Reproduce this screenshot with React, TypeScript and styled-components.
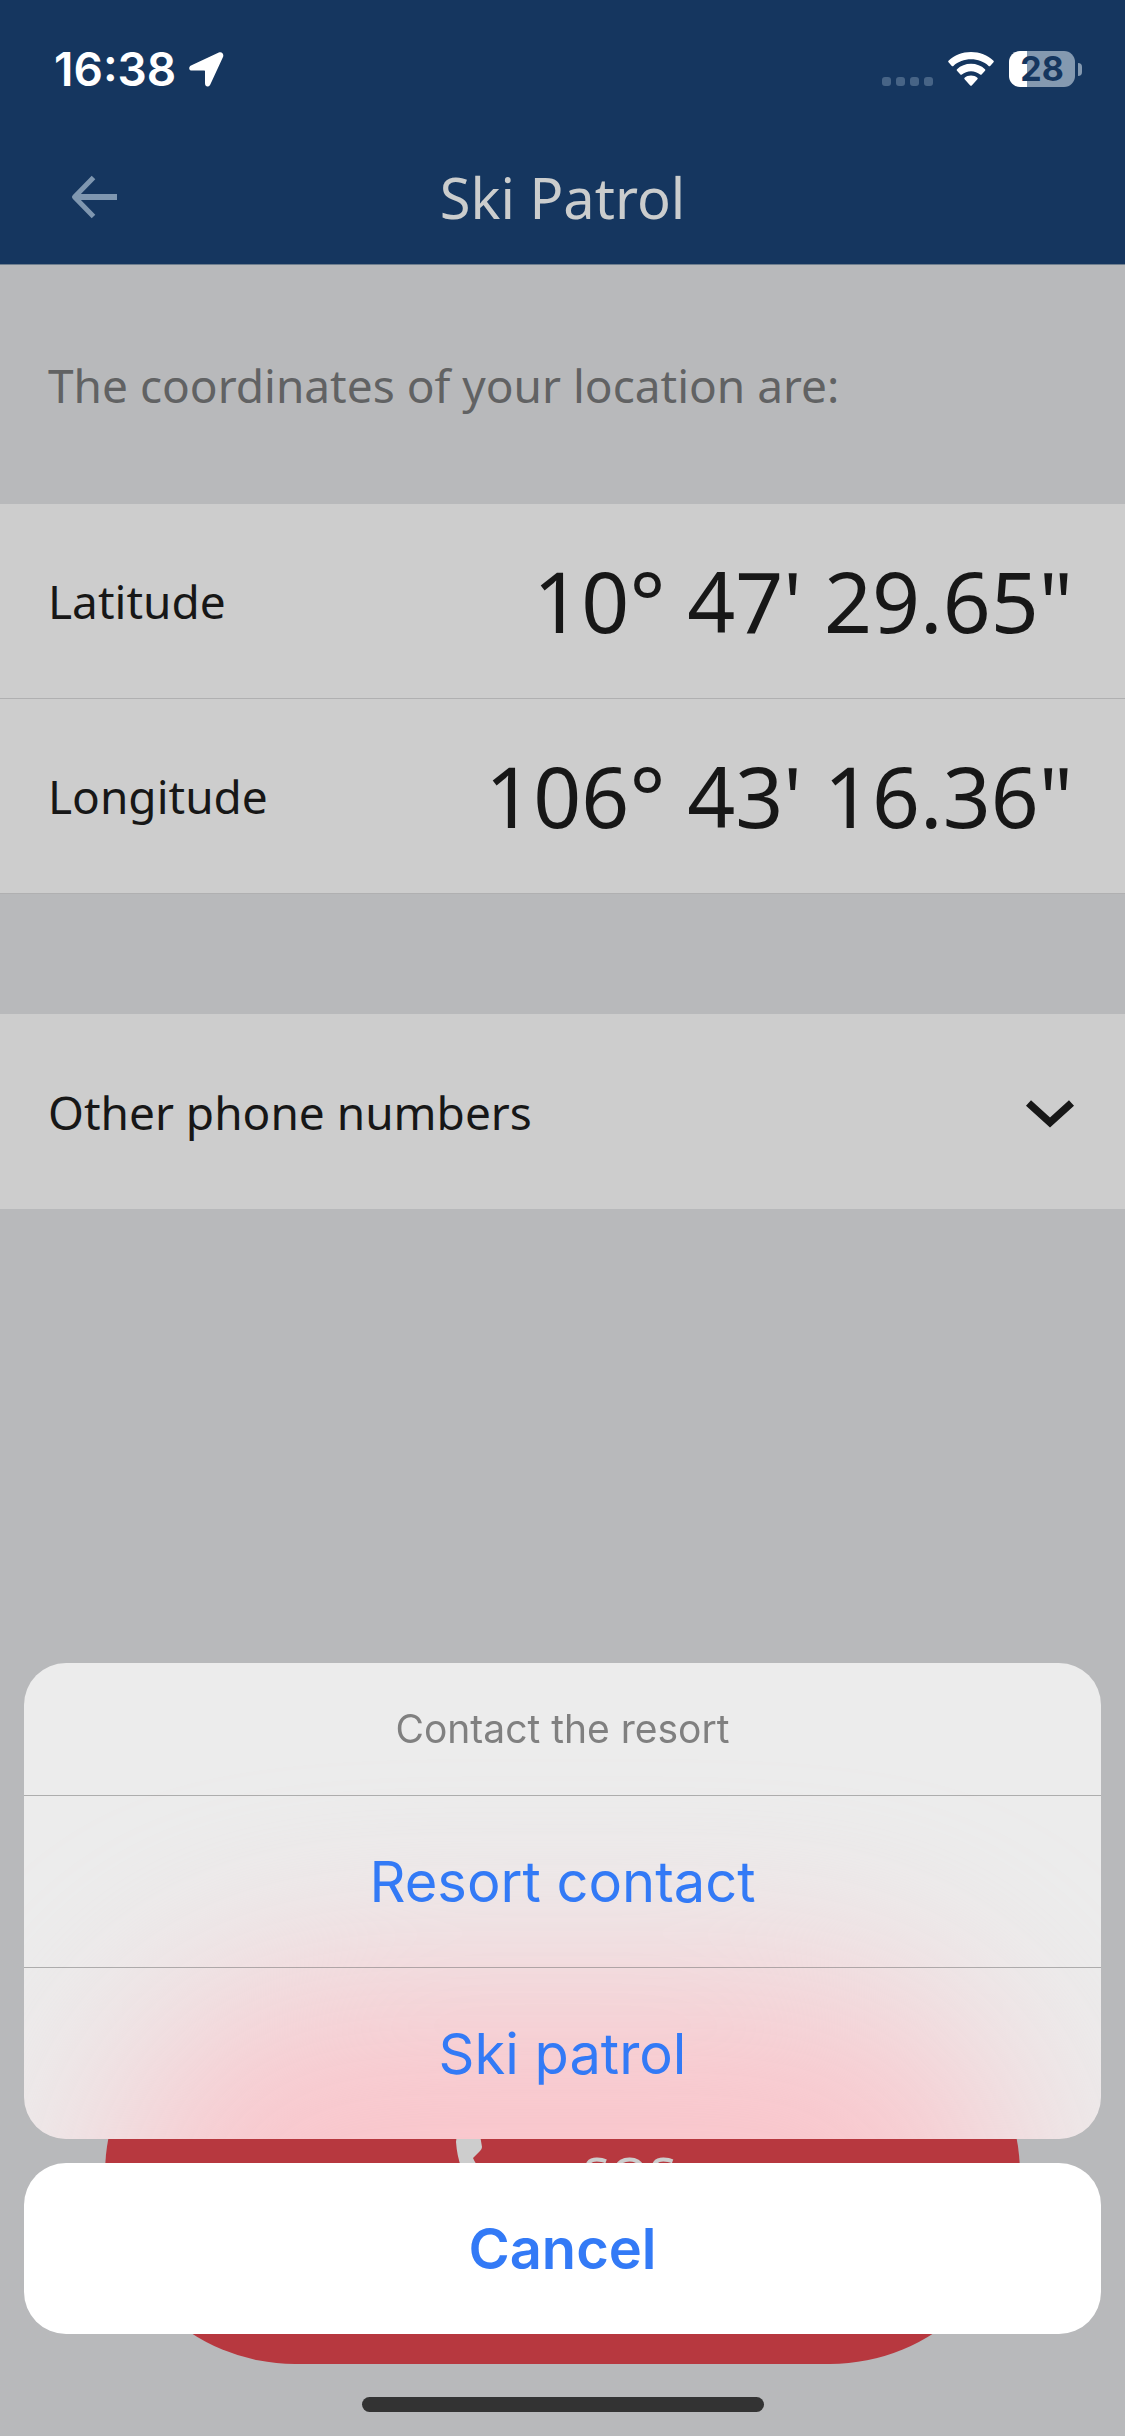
import React from "react";
import styled, { createGlobalStyle } from "styled-components";

const colors = {
  navy: "#15365f",
  page: "#b8b9bb",
  panel: "#cdcdcd",
  ink: "#171717",
  muted: "#616263",
  line: "#b0b0b1",
  blue: "#337af6",
  red: "#b7383f",
};

const uiFont = `"Inter", "Liberation Sans", sans-serif`;
const bodyFont = `"Noto Sans", "Open Sans", sans-serif`;

const GlobalStyle = createGlobalStyle`
  *, *::before, *::after { box-sizing: border-box; }
  body { margin: 0; background: ${colors.page}; }
  button { border: 0; margin: 0; padding: 0; background: none; font: inherit; color: inherit; cursor: pointer; }
  svg { display: block; }
`;

const Screen = styled.div`
  display: flex;
  flex-direction: column;
  min-height: 100vh;
  background: ${colors.page};
  color: ${colors.ink};
  font-family: ${bodyFont};
  font-size: 46px;
  line-height: 60px;
`;

const Header = styled.header`
  background: ${colors.navy};
  border-bottom: 1px solid #6f7f8f;
`;

const StatusBar = styled.div`
  display: flex;
  align-items: center;
  justify-content: space-between;
  height: 132px;
  padding: 6px 43px 0 54px;
  color: #fff;
  font-family: ${uiFont};
`;

const StatusGroup = styled.div<{ $gap: number }>`
  display: flex;
  align-items: center;
  gap: ${(p) => p.$gap}px;
`;

const Clock = styled.time`
  font-size: 46px;
  font-weight: 600;
`;

const SignalDots = styled.span`
  display: flex;
  gap: 5px;
  padding-top: 24px;
`;

const Dot = styled.i`
  width: 9px;
  height: 9px;
  border-radius: 3px;
  background: #476486;
`;

const Battery = styled.span`
  display: flex;
  align-items: center;
  gap: 3px;
`;

const BatteryBody = styled.span`
  display: flex;
  align-items: center;
  justify-content: center;
  width: 66px;
  height: 36px;
  border-radius: 11px;
  background: linear-gradient(to right, #fff 18px, #8499b0 18px);
  color: ${colors.navy};
  font-size: 34px;
  font-weight: 700;
  line-height: 36px;
`;

const BatteryTip = styled.span`
  width: 4px;
  height: 13px;
  border-radius: 0 6px 6px 0;
  background: #8499b0;
`;

const NavBar = styled.nav`
  display: grid;
  grid-template-columns: 48px 1fr 48px;
  align-items: center;
  height: 132px;
  padding: 0 70px 2px;
`;

const BackButton = styled.button`
  color: #7f97b0;
`;

const Title = styled.h1`
  margin: 0;
  color: #cbcdcd;
  font-size: 56px;
  font-weight: 400;
  line-height: 72px;
  text-align: center;
`;

const Main = styled.main`
  display: flex;
  flex: 1;
  flex-direction: column;
`;

const Intro = styled.p`
  margin: 0;
  padding: 90px 48px 89px;
  color: ${colors.muted};
`;

const Panel = styled.dl`
  margin: 0 0 120px;
  background: ${colors.panel};
`;

const Row = styled.div`
  display: flex;
  align-items: center;
  justify-content: space-between;
  height: 195px;
  padding: 0 52px 0 48px;
  border-bottom: 1px solid ${colors.line};
`;

const Label = styled.dt``;

const Value = styled.dd`
  margin: 0;
  font-size: 84px;
  line-height: 112px;
`;

const DisclosureButton = styled.button`
  display: flex;
  align-items: center;
  justify-content: space-between;
  height: 195px;
  padding: 0 50px 0 48px;
  background: ${colors.panel};
  text-align: left;
`;

const SosButton = styled.button`
  display: flex;
  align-items: center;
  justify-content: center;
  gap: 50px;
  height: 380px;
  margin: auto 105px 72px;
  border-radius: 190px;
  background: ${colors.red};
  color: #cdcdcd;
  font-size: 50px;
`;

const SheetLayer = styled.section`
  position: fixed;
  inset: auto 0 0;
  display: flex;
  flex-direction: column;
  align-items: center;
  gap: 24px;
  padding: 0 24px 24px;
  font-family: ${uiFont};
  line-height: 72px;
`;

const Sheet = styled.div`
  position: relative;
  isolation: isolate;
  width: 100%;
  overflow: hidden;
  border-radius: 42px;
  background: #ececec;

  /* soft red glow of the SOS button behind the frosted sheet */
  &::before {
    content: "";
    position: absolute;
    z-index: -1;
    inset: auto 84px -300px;
    height: 460px;
    border-radius: 230px;
    background: #f9c6cc;
    filter: blur(92px);
  }
`;

const SheetTitle = styled.h2`
  margin: 0;
  padding: 30px 0;
  color: #808080;
  font-size: 39px;
  font-weight: 400;
  text-align: center;
`;

const SheetAction = styled.button`
  display: block;
  width: 100%;
  height: 172px;
  border-top: 1px solid rgba(110, 110, 110, 0.5);
  color: ${colors.blue};
  font-size: 56px;
`;

const CancelButton = styled.button`
  width: 100%;
  height: 171px;
  border-radius: 42px;
  background: #fff;
  color: ${colors.blue};
  font-size: 56px;
  font-weight: 600;
`;

const HomeIndicator = styled.div`
  width: 402px;
  height: 15px;
  margin-top: 39px;
  border-radius: 8px;
  background: #333;
`;

const LocationIcon = () => (
  <svg width="35" height="35" viewBox="0 0 35 35" aria-hidden="true">
    <path
      d="M29.800.6 2 13.500C-.8 14.900-.2 18.600 3 18.600H15C15.700 18.600 16 18.900 16 19.600V31.200C16 35 19.700 35.600 21.300 32.400L34 5C35.200 2 32.800-.8 29.800.6Z"
      fill="currentColor"
    />
  </svg>
);

const WifiIcon = () => (
  <svg width="46" height="34" viewBox="0 0 46 35" preserveAspectRatio="none" fill="currentColor" aria-hidden="true">
    <path d="M23 0C14.300 0 6.400 3.400.5 9 0 9.500 0 10 .5 10.500L3.800 14.300C4.300 14.800 4.900 14.800 5.400 14.300 10 10 16.200 7.500 23 7.500S36 10 40.600 14.300C41.100 14.800 41.700 14.800 42.200 14.300L45.500 10.500C46 10 46 9.500 45.500 9 39.600 3.400 31.700 0 23 0Z" />
    <path d="M23 12.200C17.600 12.200 12.700 14.300 9 17.700 8.500 18.200 8.500 18.700 9 19.200L12.400 23.100C12.900 23.600 13.400 23.600 13.900 23.200 16.300 21 19.500 19.700 23 19.700S29.700 21 32.100 23.200C32.600 23.600 33.100 23.600 33.600 23.100L37 19.200C37.500 18.700 37.500 18.200 37 17.700 33.300 14.300 28.400 12.200 23 12.200Z" />
    <path d="M23 24.200C20.500 24.200 18.300 25.100 16.600 26.500 16.100 27 16.100 27.500 16.600 28L22 34.200C22.600 34.900 23.400 34.900 24 34.200L29.400 28C29.900 27.500 29.900 27 29.400 26.500 27.700 25.100 25.500 24.200 23 24.200Z" />
  </svg>
);

const BackIcon = () => (
  <svg width="48" height="48" viewBox="0 0 48 48" fill="none" stroke="currentColor" strokeWidth="5" aria-hidden="true">
    <path d="M47 24H6" strokeWidth="6" />
    <path d="M23.500 4.500 4.500 24 23.500 43.500" strokeLinejoin="round" />
  </svg>
);

const ChevronIcon = () => (
  <svg width="50" height="32" viewBox="0 0 50 32" fill="none" stroke="currentColor" strokeWidth="7.5" aria-hidden="true">
    <path d="M3.500 7 25 26.500 46.500 7" />
  </svg>
);

const PhoneIcon = () => (
  <svg width="84" height="84" viewBox="0 0 84 84" aria-hidden="true">
    <path
      d="M12 1Q14 0 18 0H27Q30 0 31 3L33 15Q33 17 31 19L24 26Q26 31 34 42Q44 54 56 59L65 51L78 55Q83 57 82 62V72Q81 79 74 79Q44 78 24 56Q9 38 7 10Q7 4 12 1Z"
      fill="currentColor"
    />
  </svg>
);

const coordinates = [
  { label: "Latitude", value: `10° 47' 29.65"` },
  { label: "Longitude", value: `106° 43' 16.36"` },
];

const contacts = ["Resort contact", "Ski patrol"];

export default function App() {
  return (
    <>
      <GlobalStyle />
      <Screen>
        <Header>
          <StatusBar>
            <StatusGroup $gap={13}>
              <Clock>16:38</Clock>
              <LocationIcon />
            </StatusGroup>
            <StatusGroup $gap={15}>
              <SignalDots>
                <Dot />
                <Dot />
                <Dot />
                <Dot />
              </SignalDots>
              <WifiIcon />
              <Battery>
                <BatteryBody>28</BatteryBody>
                <BatteryTip />
              </Battery>
            </StatusGroup>
          </StatusBar>
          <NavBar>
            <BackButton type="button" aria-label="Back">
              <BackIcon />
            </BackButton>
            <Title>Ski Patrol</Title>
          </NavBar>
        </Header>
        <Main>
          <Intro>The coordinates of your location are:</Intro>
          <Panel>
            {coordinates.map((c) => (
              <Row key={c.label}>
                <Label>{c.label}</Label>
                <Value>{c.value}</Value>
              </Row>
            ))}
          </Panel>
          <DisclosureButton type="button" aria-expanded={false}>
            Other phone numbers
            <ChevronIcon />
          </DisclosureButton>
          <SosButton type="button">
            <PhoneIcon />
            SOS
          </SosButton>
        </Main>
      </Screen>
      <SheetLayer role="dialog" aria-labelledby="sheet-title">
        <Sheet>
          <SheetTitle id="sheet-title">Contact the resort</SheetTitle>
          {contacts.map((name) => (
            <SheetAction key={name} type="button">
              {name}
            </SheetAction>
          ))}
        </Sheet>
        <CancelButton type="button">Cancel</CancelButton>
        <HomeIndicator />
      </SheetLayer>
    </>
  );
}
